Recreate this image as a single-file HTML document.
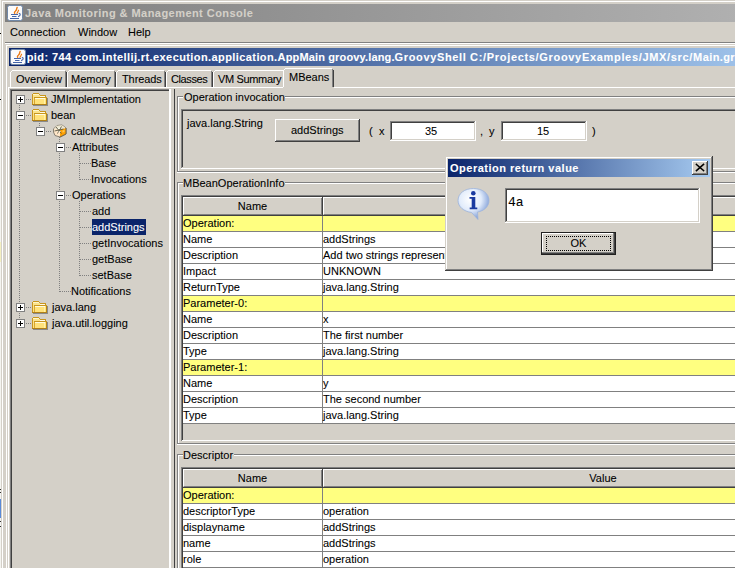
<!DOCTYPE html>
<html><head><meta charset="utf-8">
<style>
html,body{margin:0;padding:0;}
body{width:735px;height:568px;overflow:hidden;position:relative;background:#d4d0c8;font-family:"Liberation Sans",sans-serif;font-size:11px;color:#000;}
.a{position:absolute;}
.t{position:absolute;white-space:pre;line-height:13px;font-size:11px;-webkit-text-stroke:0.08px currentColor;}
.w{background:#fff;}
.g{background:#808080;}
.d{background:#404040;}
.y{background:#ffff80;}
svg{position:absolute;overflow:visible;}
</style></head><body>

<div class="a" style="left:0px;top:0px;width:1px;height:568px;background:#f4f4f0;"></div>
<div class="a" style="left:0px;top:33px;width:1px;height:1px;background:#000;"></div>
<div class="a" style="left:0px;top:99px;width:1px;height:1px;background:#000;"></div>
<div class="a" style="left:0px;top:242px;width:1px;height:20px;background:#f4f0c0;"></div>
<div class="a" style="left:0px;top:499px;width:1px;height:19px;background:#5a8ad8;"></div>
<div class="a" style="left:0px;top:489px;width:1px;height:1px;background:#303030;"></div>
<div class="a" style="left:0px;top:492px;width:1px;height:1px;background:#303030;"></div>
<div class="a" style="left:0px;top:521px;width:1px;height:1px;background:#303030;"></div>
<div class="a" style="left:0px;top:526px;width:1px;height:1px;background:#303030;"></div>
<div class="a w" style="left:2px;top:1px;width:733px;height:1px;"></div>
<div class="a w" style="left:2px;top:1px;width:1px;height:567px;"></div>
<div class="a" style="left:5px;top:4px;width:980px;height:18px;background:linear-gradient(to right,#808080,#c0c0c0);"></div>
<svg style="left:7px;top:5px" width="16" height="16" viewBox="0 0 16 16">
<rect x="0.5" y="0.5" width="15" height="15" rx="2" fill="#fbfbfb" stroke="#7088a8" stroke-width="1"/>
<path d="M10.5 2 C9 3.5 10.5 4.5 8.3 6.3 C7 7.3 7.5 8.2 8 8.8" stroke="#ec7a12" stroke-width="1.4" fill="none"/>
<path d="M11.8 4.8 C10.8 6 11.5 6.8 9.6 8.6" stroke="#ec7a12" stroke-width="1.2" fill="none"/>
<path d="M4 9.5 H11 M5 11.5 H9.5 M3 13.5 H12" stroke="#4466aa" stroke-width="1.1"/>
<path d="M11.8 8.3 C14 8.8 13.6 11.2 11 11.6" stroke="#4466aa" stroke-width="1.1" fill="none"/>
</svg>
<div class="t" style="left:25px;top:7px;font-weight:bold;color:#d4d0c8;letter-spacing:0.45px">Java Monitoring &amp; Management Console</div>
<div class="t" style="left:10px;top:26px;">Connection</div>
<div class="t" style="left:78px;top:26px;">Window</div>
<div class="t" style="left:128px;top:26px;">Help</div>
<div class="a g" style="left:5px;top:42px;width:730px;height:1px;"></div>
<div class="a w" style="left:5px;top:43px;width:730px;height:1px;"></div>
<div class="a w" style="left:6px;top:45px;width:729px;height:1px;"></div>
<div class="a w" style="left:6px;top:45px;width:1px;height:523px;"></div>
<div class="a" style="left:9px;top:48px;width:770px;height:18px;background:linear-gradient(to right,#0a246a,#a6caf0);"></div>
<svg style="left:10px;top:49px" width="16" height="16" viewBox="0 0 16 16">
<rect x="0.5" y="0.5" width="15" height="15" rx="2" fill="#fbfbfb" stroke="#7088a8" stroke-width="1"/>
<path d="M10.5 2 C9 3.5 10.5 4.5 8.3 6.3 C7 7.3 7.5 8.2 8 8.8" stroke="#ec7a12" stroke-width="1.4" fill="none"/>
<path d="M11.8 4.8 C10.8 6 11.5 6.8 9.6 8.6" stroke="#ec7a12" stroke-width="1.2" fill="none"/>
<path d="M4 9.5 H11 M5 11.5 H9.5 M3 13.5 H12" stroke="#4466aa" stroke-width="1.1"/>
<path d="M11.8 8.3 C14 8.8 13.6 11.2 11 11.6" stroke="#4466aa" stroke-width="1.1" fill="none"/>
</svg>
<div class="t" style="left:26.7px;top:51px;font-weight:bold;color:#fff;letter-spacing:0.409px">pid: 744 com.intellij.rt.execution.application.</div>
<div class="t" style="left:277.6px;top:51px;font-weight:bold;color:#fff;letter-spacing:0.146px">AppMain groovy.lang.</div>
<div class="t" style="left:394.6px;top:51px;font-weight:bold;color:#fff;letter-spacing:0.637px">GroovyShell </div>
<div class="t" style="left:470.1px;top:51px;font-weight:bold;color:#fff;letter-spacing:0.677px">C:/Projects/GroovyExamples/JMX/src/</div>
<div class="t" style="left:693.1px;top:51px;font-weight:bold;color:#fff;letter-spacing:0.4px">Main.groovy</div>
<div class="a w" style="left:8px;top:87px;width:275px;height:1px;"></div>
<div class="a w" style="left:334px;top:87px;width:401px;height:1px;"></div>
<div class="a w" style="left:8px;top:87px;width:1px;height:481px;"></div>
<div class="a w" style="left:12px;top:70px;width:53px;height:1px;"></div>
<div class="a w" style="left:11px;top:71px;width:1px;height:1px;"></div>
<div class="a w" style="left:10px;top:72px;width:1px;height:15px;"></div>
<div class="a g" style="left:65px;top:71px;width:1px;height:16px;"></div>
<div class="a d" style="left:66px;top:72px;width:1px;height:15px;"></div>
<div class="t" style="left:16px;top:73px;letter-spacing:0px">Overview</div>
<div class="a w" style="left:69px;top:70px;width:45px;height:1px;"></div>
<div class="a w" style="left:68px;top:71px;width:1px;height:1px;"></div>
<div class="a w" style="left:67px;top:72px;width:1px;height:15px;"></div>
<div class="a g" style="left:114px;top:71px;width:1px;height:16px;"></div>
<div class="a d" style="left:115px;top:72px;width:1px;height:15px;"></div>
<div class="t" style="left:71px;top:73px;letter-spacing:0px">Memory</div>
<div class="a w" style="left:118px;top:70px;width:46px;height:1px;"></div>
<div class="a w" style="left:117px;top:71px;width:1px;height:1px;"></div>
<div class="a w" style="left:116px;top:72px;width:1px;height:15px;"></div>
<div class="a g" style="left:164px;top:71px;width:1px;height:16px;"></div>
<div class="a d" style="left:165px;top:72px;width:1px;height:15px;"></div>
<div class="t" style="left:122px;top:73px;letter-spacing:-0.1px">Threads</div>
<div class="a w" style="left:168px;top:70px;width:43px;height:1px;"></div>
<div class="a w" style="left:167px;top:71px;width:1px;height:1px;"></div>
<div class="a w" style="left:166px;top:72px;width:1px;height:15px;"></div>
<div class="a g" style="left:211px;top:71px;width:1px;height:16px;"></div>
<div class="a d" style="left:212px;top:72px;width:1px;height:15px;"></div>
<div class="t" style="left:171px;top:73px;letter-spacing:-0.4px">Classes</div>
<div class="a w" style="left:215px;top:70px;width:68px;height:1px;"></div>
<div class="a w" style="left:214px;top:71px;width:1px;height:1px;"></div>
<div class="a w" style="left:213px;top:72px;width:1px;height:15px;"></div>
<div class="a g" style="left:283px;top:71px;width:1px;height:16px;"></div>
<div class="a d" style="left:284px;top:72px;width:1px;height:15px;"></div>
<div class="t" style="left:218px;top:73px;letter-spacing:-0.35px">VM Summary</div>
<div class="a" style="left:284px;top:69px;width:49px;height:19px;background:#d4d0c8;"></div>
<div class="a w" style="left:285px;top:68px;width:47px;height:1px;"></div>
<div class="a w" style="left:284px;top:69px;width:1px;height:1px;"></div>
<div class="a w" style="left:283px;top:70px;width:1px;height:17px;"></div>
<div class="a g" style="left:332px;top:69px;width:1px;height:18px;"></div>
<div class="a d" style="left:333px;top:70px;width:1px;height:17px;"></div>
<div class="t" style="left:289px;top:71px;">MBeans</div>
<div class="a g" style="left:10px;top:89px;width:159px;height:1px;"></div>
<div class="a d" style="left:11px;top:90px;width:158px;height:1px;"></div>
<div class="a g" style="left:10px;top:89px;width:1px;height:479px;"></div>
<div class="a d" style="left:11px;top:90px;width:1px;height:478px;"></div>
<div class="a w" style="left:169px;top:89px;width:2px;height:479px;"></div>
<div class="a" style="left:19px;top:105px;width:1px;height:1px;background:#808080;"></div>
<div class="a" style="left:19px;top:107px;width:1px;height:1px;background:#808080;"></div>
<div class="a" style="left:19px;top:109px;width:1px;height:1px;background:#808080;"></div>
<div class="a" style="left:19px;top:111px;width:1px;height:1px;background:#808080;"></div>
<div class="a" style="left:19px;top:113px;width:1px;height:1px;background:#808080;"></div>
<div class="a" style="left:19px;top:115px;width:1px;height:1px;background:#808080;"></div>
<div class="a" style="left:19px;top:117px;width:1px;height:1px;background:#808080;"></div>
<div class="a" style="left:19px;top:119px;width:1px;height:1px;background:#808080;"></div>
<div class="a" style="left:19px;top:121px;width:1px;height:1px;background:#808080;"></div>
<div class="a" style="left:19px;top:123px;width:1px;height:1px;background:#808080;"></div>
<div class="a" style="left:19px;top:125px;width:1px;height:1px;background:#808080;"></div>
<div class="a" style="left:19px;top:127px;width:1px;height:1px;background:#808080;"></div>
<div class="a" style="left:19px;top:129px;width:1px;height:1px;background:#808080;"></div>
<div class="a" style="left:19px;top:131px;width:1px;height:1px;background:#808080;"></div>
<div class="a" style="left:19px;top:133px;width:1px;height:1px;background:#808080;"></div>
<div class="a" style="left:19px;top:135px;width:1px;height:1px;background:#808080;"></div>
<div class="a" style="left:19px;top:137px;width:1px;height:1px;background:#808080;"></div>
<div class="a" style="left:19px;top:139px;width:1px;height:1px;background:#808080;"></div>
<div class="a" style="left:19px;top:141px;width:1px;height:1px;background:#808080;"></div>
<div class="a" style="left:19px;top:143px;width:1px;height:1px;background:#808080;"></div>
<div class="a" style="left:19px;top:145px;width:1px;height:1px;background:#808080;"></div>
<div class="a" style="left:19px;top:147px;width:1px;height:1px;background:#808080;"></div>
<div class="a" style="left:19px;top:149px;width:1px;height:1px;background:#808080;"></div>
<div class="a" style="left:19px;top:151px;width:1px;height:1px;background:#808080;"></div>
<div class="a" style="left:19px;top:153px;width:1px;height:1px;background:#808080;"></div>
<div class="a" style="left:19px;top:155px;width:1px;height:1px;background:#808080;"></div>
<div class="a" style="left:19px;top:157px;width:1px;height:1px;background:#808080;"></div>
<div class="a" style="left:19px;top:159px;width:1px;height:1px;background:#808080;"></div>
<div class="a" style="left:19px;top:161px;width:1px;height:1px;background:#808080;"></div>
<div class="a" style="left:19px;top:163px;width:1px;height:1px;background:#808080;"></div>
<div class="a" style="left:19px;top:165px;width:1px;height:1px;background:#808080;"></div>
<div class="a" style="left:19px;top:167px;width:1px;height:1px;background:#808080;"></div>
<div class="a" style="left:19px;top:169px;width:1px;height:1px;background:#808080;"></div>
<div class="a" style="left:19px;top:171px;width:1px;height:1px;background:#808080;"></div>
<div class="a" style="left:19px;top:173px;width:1px;height:1px;background:#808080;"></div>
<div class="a" style="left:19px;top:175px;width:1px;height:1px;background:#808080;"></div>
<div class="a" style="left:19px;top:177px;width:1px;height:1px;background:#808080;"></div>
<div class="a" style="left:19px;top:179px;width:1px;height:1px;background:#808080;"></div>
<div class="a" style="left:19px;top:181px;width:1px;height:1px;background:#808080;"></div>
<div class="a" style="left:19px;top:183px;width:1px;height:1px;background:#808080;"></div>
<div class="a" style="left:19px;top:185px;width:1px;height:1px;background:#808080;"></div>
<div class="a" style="left:19px;top:187px;width:1px;height:1px;background:#808080;"></div>
<div class="a" style="left:19px;top:189px;width:1px;height:1px;background:#808080;"></div>
<div class="a" style="left:19px;top:191px;width:1px;height:1px;background:#808080;"></div>
<div class="a" style="left:19px;top:193px;width:1px;height:1px;background:#808080;"></div>
<div class="a" style="left:19px;top:195px;width:1px;height:1px;background:#808080;"></div>
<div class="a" style="left:19px;top:197px;width:1px;height:1px;background:#808080;"></div>
<div class="a" style="left:19px;top:199px;width:1px;height:1px;background:#808080;"></div>
<div class="a" style="left:19px;top:201px;width:1px;height:1px;background:#808080;"></div>
<div class="a" style="left:19px;top:203px;width:1px;height:1px;background:#808080;"></div>
<div class="a" style="left:19px;top:205px;width:1px;height:1px;background:#808080;"></div>
<div class="a" style="left:19px;top:207px;width:1px;height:1px;background:#808080;"></div>
<div class="a" style="left:19px;top:209px;width:1px;height:1px;background:#808080;"></div>
<div class="a" style="left:19px;top:211px;width:1px;height:1px;background:#808080;"></div>
<div class="a" style="left:19px;top:213px;width:1px;height:1px;background:#808080;"></div>
<div class="a" style="left:19px;top:215px;width:1px;height:1px;background:#808080;"></div>
<div class="a" style="left:19px;top:217px;width:1px;height:1px;background:#808080;"></div>
<div class="a" style="left:19px;top:219px;width:1px;height:1px;background:#808080;"></div>
<div class="a" style="left:19px;top:221px;width:1px;height:1px;background:#808080;"></div>
<div class="a" style="left:19px;top:223px;width:1px;height:1px;background:#808080;"></div>
<div class="a" style="left:19px;top:225px;width:1px;height:1px;background:#808080;"></div>
<div class="a" style="left:19px;top:227px;width:1px;height:1px;background:#808080;"></div>
<div class="a" style="left:19px;top:229px;width:1px;height:1px;background:#808080;"></div>
<div class="a" style="left:19px;top:231px;width:1px;height:1px;background:#808080;"></div>
<div class="a" style="left:19px;top:233px;width:1px;height:1px;background:#808080;"></div>
<div class="a" style="left:19px;top:235px;width:1px;height:1px;background:#808080;"></div>
<div class="a" style="left:19px;top:237px;width:1px;height:1px;background:#808080;"></div>
<div class="a" style="left:19px;top:239px;width:1px;height:1px;background:#808080;"></div>
<div class="a" style="left:19px;top:241px;width:1px;height:1px;background:#808080;"></div>
<div class="a" style="left:19px;top:243px;width:1px;height:1px;background:#808080;"></div>
<div class="a" style="left:19px;top:245px;width:1px;height:1px;background:#808080;"></div>
<div class="a" style="left:19px;top:247px;width:1px;height:1px;background:#808080;"></div>
<div class="a" style="left:19px;top:249px;width:1px;height:1px;background:#808080;"></div>
<div class="a" style="left:19px;top:251px;width:1px;height:1px;background:#808080;"></div>
<div class="a" style="left:19px;top:253px;width:1px;height:1px;background:#808080;"></div>
<div class="a" style="left:19px;top:255px;width:1px;height:1px;background:#808080;"></div>
<div class="a" style="left:19px;top:257px;width:1px;height:1px;background:#808080;"></div>
<div class="a" style="left:19px;top:259px;width:1px;height:1px;background:#808080;"></div>
<div class="a" style="left:19px;top:261px;width:1px;height:1px;background:#808080;"></div>
<div class="a" style="left:19px;top:263px;width:1px;height:1px;background:#808080;"></div>
<div class="a" style="left:19px;top:265px;width:1px;height:1px;background:#808080;"></div>
<div class="a" style="left:19px;top:267px;width:1px;height:1px;background:#808080;"></div>
<div class="a" style="left:19px;top:269px;width:1px;height:1px;background:#808080;"></div>
<div class="a" style="left:19px;top:271px;width:1px;height:1px;background:#808080;"></div>
<div class="a" style="left:19px;top:273px;width:1px;height:1px;background:#808080;"></div>
<div class="a" style="left:19px;top:275px;width:1px;height:1px;background:#808080;"></div>
<div class="a" style="left:19px;top:277px;width:1px;height:1px;background:#808080;"></div>
<div class="a" style="left:19px;top:279px;width:1px;height:1px;background:#808080;"></div>
<div class="a" style="left:19px;top:281px;width:1px;height:1px;background:#808080;"></div>
<div class="a" style="left:19px;top:283px;width:1px;height:1px;background:#808080;"></div>
<div class="a" style="left:19px;top:285px;width:1px;height:1px;background:#808080;"></div>
<div class="a" style="left:19px;top:287px;width:1px;height:1px;background:#808080;"></div>
<div class="a" style="left:19px;top:289px;width:1px;height:1px;background:#808080;"></div>
<div class="a" style="left:19px;top:291px;width:1px;height:1px;background:#808080;"></div>
<div class="a" style="left:19px;top:293px;width:1px;height:1px;background:#808080;"></div>
<div class="a" style="left:19px;top:295px;width:1px;height:1px;background:#808080;"></div>
<div class="a" style="left:19px;top:297px;width:1px;height:1px;background:#808080;"></div>
<div class="a" style="left:19px;top:299px;width:1px;height:1px;background:#808080;"></div>
<div class="a" style="left:19px;top:301px;width:1px;height:1px;background:#808080;"></div>
<div class="a" style="left:19px;top:303px;width:1px;height:1px;background:#808080;"></div>
<div class="a" style="left:19px;top:305px;width:1px;height:1px;background:#808080;"></div>
<div class="a" style="left:19px;top:307px;width:1px;height:1px;background:#808080;"></div>
<div class="a" style="left:19px;top:309px;width:1px;height:1px;background:#808080;"></div>
<div class="a" style="left:19px;top:311px;width:1px;height:1px;background:#808080;"></div>
<div class="a" style="left:19px;top:313px;width:1px;height:1px;background:#808080;"></div>
<div class="a" style="left:19px;top:315px;width:1px;height:1px;background:#808080;"></div>
<div class="a" style="left:19px;top:317px;width:1px;height:1px;background:#808080;"></div>
<div class="a" style="left:39px;top:119px;width:1px;height:1px;background:#808080;"></div>
<div class="a" style="left:39px;top:121px;width:1px;height:1px;background:#808080;"></div>
<div class="a" style="left:39px;top:123px;width:1px;height:1px;background:#808080;"></div>
<div class="a" style="left:39px;top:125px;width:1px;height:1px;background:#808080;"></div>
<div class="a" style="left:59px;top:137px;width:1px;height:1px;background:#808080;"></div>
<div class="a" style="left:59px;top:139px;width:1px;height:1px;background:#808080;"></div>
<div class="a" style="left:59px;top:141px;width:1px;height:1px;background:#808080;"></div>
<div class="a" style="left:59px;top:143px;width:1px;height:1px;background:#808080;"></div>
<div class="a" style="left:59px;top:145px;width:1px;height:1px;background:#808080;"></div>
<div class="a" style="left:59px;top:147px;width:1px;height:1px;background:#808080;"></div>
<div class="a" style="left:59px;top:149px;width:1px;height:1px;background:#808080;"></div>
<div class="a" style="left:59px;top:151px;width:1px;height:1px;background:#808080;"></div>
<div class="a" style="left:59px;top:153px;width:1px;height:1px;background:#808080;"></div>
<div class="a" style="left:59px;top:155px;width:1px;height:1px;background:#808080;"></div>
<div class="a" style="left:59px;top:157px;width:1px;height:1px;background:#808080;"></div>
<div class="a" style="left:59px;top:159px;width:1px;height:1px;background:#808080;"></div>
<div class="a" style="left:59px;top:161px;width:1px;height:1px;background:#808080;"></div>
<div class="a" style="left:59px;top:163px;width:1px;height:1px;background:#808080;"></div>
<div class="a" style="left:59px;top:165px;width:1px;height:1px;background:#808080;"></div>
<div class="a" style="left:59px;top:167px;width:1px;height:1px;background:#808080;"></div>
<div class="a" style="left:59px;top:169px;width:1px;height:1px;background:#808080;"></div>
<div class="a" style="left:59px;top:171px;width:1px;height:1px;background:#808080;"></div>
<div class="a" style="left:59px;top:173px;width:1px;height:1px;background:#808080;"></div>
<div class="a" style="left:59px;top:175px;width:1px;height:1px;background:#808080;"></div>
<div class="a" style="left:59px;top:177px;width:1px;height:1px;background:#808080;"></div>
<div class="a" style="left:59px;top:179px;width:1px;height:1px;background:#808080;"></div>
<div class="a" style="left:59px;top:181px;width:1px;height:1px;background:#808080;"></div>
<div class="a" style="left:59px;top:183px;width:1px;height:1px;background:#808080;"></div>
<div class="a" style="left:59px;top:185px;width:1px;height:1px;background:#808080;"></div>
<div class="a" style="left:59px;top:187px;width:1px;height:1px;background:#808080;"></div>
<div class="a" style="left:59px;top:189px;width:1px;height:1px;background:#808080;"></div>
<div class="a" style="left:59px;top:191px;width:1px;height:1px;background:#808080;"></div>
<div class="a" style="left:59px;top:193px;width:1px;height:1px;background:#808080;"></div>
<div class="a" style="left:59px;top:195px;width:1px;height:1px;background:#808080;"></div>
<div class="a" style="left:59px;top:197px;width:1px;height:1px;background:#808080;"></div>
<div class="a" style="left:59px;top:199px;width:1px;height:1px;background:#808080;"></div>
<div class="a" style="left:59px;top:201px;width:1px;height:1px;background:#808080;"></div>
<div class="a" style="left:59px;top:203px;width:1px;height:1px;background:#808080;"></div>
<div class="a" style="left:59px;top:205px;width:1px;height:1px;background:#808080;"></div>
<div class="a" style="left:59px;top:207px;width:1px;height:1px;background:#808080;"></div>
<div class="a" style="left:59px;top:209px;width:1px;height:1px;background:#808080;"></div>
<div class="a" style="left:59px;top:211px;width:1px;height:1px;background:#808080;"></div>
<div class="a" style="left:59px;top:213px;width:1px;height:1px;background:#808080;"></div>
<div class="a" style="left:59px;top:215px;width:1px;height:1px;background:#808080;"></div>
<div class="a" style="left:59px;top:217px;width:1px;height:1px;background:#808080;"></div>
<div class="a" style="left:59px;top:219px;width:1px;height:1px;background:#808080;"></div>
<div class="a" style="left:59px;top:221px;width:1px;height:1px;background:#808080;"></div>
<div class="a" style="left:59px;top:223px;width:1px;height:1px;background:#808080;"></div>
<div class="a" style="left:59px;top:225px;width:1px;height:1px;background:#808080;"></div>
<div class="a" style="left:59px;top:227px;width:1px;height:1px;background:#808080;"></div>
<div class="a" style="left:59px;top:229px;width:1px;height:1px;background:#808080;"></div>
<div class="a" style="left:59px;top:231px;width:1px;height:1px;background:#808080;"></div>
<div class="a" style="left:59px;top:233px;width:1px;height:1px;background:#808080;"></div>
<div class="a" style="left:59px;top:235px;width:1px;height:1px;background:#808080;"></div>
<div class="a" style="left:59px;top:237px;width:1px;height:1px;background:#808080;"></div>
<div class="a" style="left:59px;top:239px;width:1px;height:1px;background:#808080;"></div>
<div class="a" style="left:59px;top:241px;width:1px;height:1px;background:#808080;"></div>
<div class="a" style="left:59px;top:243px;width:1px;height:1px;background:#808080;"></div>
<div class="a" style="left:59px;top:245px;width:1px;height:1px;background:#808080;"></div>
<div class="a" style="left:59px;top:247px;width:1px;height:1px;background:#808080;"></div>
<div class="a" style="left:59px;top:249px;width:1px;height:1px;background:#808080;"></div>
<div class="a" style="left:59px;top:251px;width:1px;height:1px;background:#808080;"></div>
<div class="a" style="left:59px;top:253px;width:1px;height:1px;background:#808080;"></div>
<div class="a" style="left:59px;top:255px;width:1px;height:1px;background:#808080;"></div>
<div class="a" style="left:59px;top:257px;width:1px;height:1px;background:#808080;"></div>
<div class="a" style="left:59px;top:259px;width:1px;height:1px;background:#808080;"></div>
<div class="a" style="left:59px;top:261px;width:1px;height:1px;background:#808080;"></div>
<div class="a" style="left:59px;top:263px;width:1px;height:1px;background:#808080;"></div>
<div class="a" style="left:59px;top:265px;width:1px;height:1px;background:#808080;"></div>
<div class="a" style="left:59px;top:267px;width:1px;height:1px;background:#808080;"></div>
<div class="a" style="left:59px;top:269px;width:1px;height:1px;background:#808080;"></div>
<div class="a" style="left:59px;top:271px;width:1px;height:1px;background:#808080;"></div>
<div class="a" style="left:59px;top:273px;width:1px;height:1px;background:#808080;"></div>
<div class="a" style="left:59px;top:275px;width:1px;height:1px;background:#808080;"></div>
<div class="a" style="left:59px;top:277px;width:1px;height:1px;background:#808080;"></div>
<div class="a" style="left:59px;top:279px;width:1px;height:1px;background:#808080;"></div>
<div class="a" style="left:59px;top:281px;width:1px;height:1px;background:#808080;"></div>
<div class="a" style="left:59px;top:283px;width:1px;height:1px;background:#808080;"></div>
<div class="a" style="left:59px;top:285px;width:1px;height:1px;background:#808080;"></div>
<div class="a" style="left:59px;top:287px;width:1px;height:1px;background:#808080;"></div>
<div class="a" style="left:59px;top:289px;width:1px;height:1px;background:#808080;"></div>
<div class="a" style="left:59px;top:291px;width:1px;height:1px;background:#808080;"></div>
<div class="a" style="left:79px;top:153px;width:1px;height:1px;background:#808080;"></div>
<div class="a" style="left:79px;top:155px;width:1px;height:1px;background:#808080;"></div>
<div class="a" style="left:79px;top:157px;width:1px;height:1px;background:#808080;"></div>
<div class="a" style="left:79px;top:159px;width:1px;height:1px;background:#808080;"></div>
<div class="a" style="left:79px;top:161px;width:1px;height:1px;background:#808080;"></div>
<div class="a" style="left:79px;top:163px;width:1px;height:1px;background:#808080;"></div>
<div class="a" style="left:79px;top:165px;width:1px;height:1px;background:#808080;"></div>
<div class="a" style="left:79px;top:167px;width:1px;height:1px;background:#808080;"></div>
<div class="a" style="left:79px;top:169px;width:1px;height:1px;background:#808080;"></div>
<div class="a" style="left:79px;top:171px;width:1px;height:1px;background:#808080;"></div>
<div class="a" style="left:79px;top:173px;width:1px;height:1px;background:#808080;"></div>
<div class="a" style="left:79px;top:175px;width:1px;height:1px;background:#808080;"></div>
<div class="a" style="left:79px;top:177px;width:1px;height:1px;background:#808080;"></div>
<div class="a" style="left:79px;top:179px;width:1px;height:1px;background:#808080;"></div>
<div class="a" style="left:79px;top:201px;width:1px;height:1px;background:#808080;"></div>
<div class="a" style="left:79px;top:203px;width:1px;height:1px;background:#808080;"></div>
<div class="a" style="left:79px;top:205px;width:1px;height:1px;background:#808080;"></div>
<div class="a" style="left:79px;top:207px;width:1px;height:1px;background:#808080;"></div>
<div class="a" style="left:79px;top:209px;width:1px;height:1px;background:#808080;"></div>
<div class="a" style="left:79px;top:211px;width:1px;height:1px;background:#808080;"></div>
<div class="a" style="left:79px;top:213px;width:1px;height:1px;background:#808080;"></div>
<div class="a" style="left:79px;top:215px;width:1px;height:1px;background:#808080;"></div>
<div class="a" style="left:79px;top:217px;width:1px;height:1px;background:#808080;"></div>
<div class="a" style="left:79px;top:219px;width:1px;height:1px;background:#808080;"></div>
<div class="a" style="left:79px;top:221px;width:1px;height:1px;background:#808080;"></div>
<div class="a" style="left:79px;top:223px;width:1px;height:1px;background:#808080;"></div>
<div class="a" style="left:79px;top:225px;width:1px;height:1px;background:#808080;"></div>
<div class="a" style="left:79px;top:227px;width:1px;height:1px;background:#808080;"></div>
<div class="a" style="left:79px;top:229px;width:1px;height:1px;background:#808080;"></div>
<div class="a" style="left:79px;top:231px;width:1px;height:1px;background:#808080;"></div>
<div class="a" style="left:79px;top:233px;width:1px;height:1px;background:#808080;"></div>
<div class="a" style="left:79px;top:235px;width:1px;height:1px;background:#808080;"></div>
<div class="a" style="left:79px;top:237px;width:1px;height:1px;background:#808080;"></div>
<div class="a" style="left:79px;top:239px;width:1px;height:1px;background:#808080;"></div>
<div class="a" style="left:79px;top:241px;width:1px;height:1px;background:#808080;"></div>
<div class="a" style="left:79px;top:243px;width:1px;height:1px;background:#808080;"></div>
<div class="a" style="left:79px;top:245px;width:1px;height:1px;background:#808080;"></div>
<div class="a" style="left:79px;top:247px;width:1px;height:1px;background:#808080;"></div>
<div class="a" style="left:79px;top:249px;width:1px;height:1px;background:#808080;"></div>
<div class="a" style="left:79px;top:251px;width:1px;height:1px;background:#808080;"></div>
<div class="a" style="left:79px;top:253px;width:1px;height:1px;background:#808080;"></div>
<div class="a" style="left:79px;top:255px;width:1px;height:1px;background:#808080;"></div>
<div class="a" style="left:79px;top:257px;width:1px;height:1px;background:#808080;"></div>
<div class="a" style="left:79px;top:259px;width:1px;height:1px;background:#808080;"></div>
<div class="a" style="left:79px;top:261px;width:1px;height:1px;background:#808080;"></div>
<div class="a" style="left:79px;top:263px;width:1px;height:1px;background:#808080;"></div>
<div class="a" style="left:79px;top:265px;width:1px;height:1px;background:#808080;"></div>
<div class="a" style="left:79px;top:267px;width:1px;height:1px;background:#808080;"></div>
<div class="a" style="left:79px;top:269px;width:1px;height:1px;background:#808080;"></div>
<div class="a" style="left:79px;top:271px;width:1px;height:1px;background:#808080;"></div>
<div class="a" style="left:79px;top:273px;width:1px;height:1px;background:#808080;"></div>
<div class="a" style="left:79px;top:275px;width:1px;height:1px;background:#808080;"></div>
<div class="a" style="left:16px;top:95px;width:9px;height:9px;background:#fff;box-shadow:inset 0 0 0 1px #808080"></div>
<div class="a" style="left:18px;top:99px;width:5px;height:1px;background:#000;"></div>
<div class="a" style="left:20px;top:97px;width:1px;height:5px;background:#000;"></div>
<div class="a" style="left:26px;top:99px;width:1px;height:1px;background:#808080;"></div>
<div class="a" style="left:28px;top:99px;width:1px;height:1px;background:#808080;"></div>
<div class="a" style="left:30px;top:99px;width:1px;height:1px;background:#808080;"></div>
<svg style="left:28px;top:90px" width="24" height="18" viewBox="0 0 24 18" shape-rendering="crispEdges">
<rect x="5" y="4" width="7" height="11" fill="#fbe38a"/>
<rect x="12" y="6" width="5" height="2" fill="#fbe38a"/>
<rect x="5" y="4" width="6" height="1" fill="#fff6c8"/>
<rect x="12" y="6" width="5" height="1" fill="#fffbe8"/>
<rect x="5" y="3" width="6" height="1" fill="#c8961e"/>
<rect x="4" y="4" width="1" height="11" fill="#c8961e"/>
<rect x="11" y="4" width="1" height="1" fill="#c8961e"/>
<rect x="12" y="5" width="5" height="1" fill="#c8961e"/>
<rect x="17" y="5" width="1" height="2" fill="#c8961e"/>
<rect x="7" y="8" width="11" height="6" fill="#ffe27a"/>
<rect x="7" y="8" width="10" height="1" fill="#fffbe0"/>
<rect x="16" y="9" width="1" height="5" fill="#fff2a8"/>
<rect x="6" y="7" width="13" height="1" fill="#c8961e"/>
<rect x="6" y="8" width="1" height="6" fill="#d8a630"/>
<rect x="18" y="8" width="1" height="7" fill="#b88616"/>
<rect x="4" y="14" width="15" height="1" fill="#b08018"/>
<rect x="19" y="8" width="1" height="8" fill="#8a8a8a"/>
<rect x="5" y="15" width="15" height="1" fill="#8a8a8a"/>
</svg>
<div class="t" style="left:51px;top:93px;">JMImplementation</div>
<div class="a" style="left:16px;top:111px;width:9px;height:9px;background:#fff;box-shadow:inset 0 0 0 1px #808080"></div>
<div class="a" style="left:18px;top:115px;width:5px;height:1px;background:#000;"></div>
<div class="a" style="left:26px;top:115px;width:1px;height:1px;background:#808080;"></div>
<div class="a" style="left:28px;top:115px;width:1px;height:1px;background:#808080;"></div>
<div class="a" style="left:30px;top:115px;width:1px;height:1px;background:#808080;"></div>
<svg style="left:28px;top:106px" width="24" height="18" viewBox="0 0 24 18" shape-rendering="crispEdges">
<rect x="5" y="4" width="7" height="11" fill="#fbe38a"/>
<rect x="12" y="6" width="5" height="2" fill="#fbe38a"/>
<rect x="5" y="4" width="6" height="1" fill="#fff6c8"/>
<rect x="12" y="6" width="5" height="1" fill="#fffbe8"/>
<rect x="5" y="3" width="6" height="1" fill="#c8961e"/>
<rect x="4" y="4" width="1" height="11" fill="#c8961e"/>
<rect x="11" y="4" width="1" height="1" fill="#c8961e"/>
<rect x="12" y="5" width="5" height="1" fill="#c8961e"/>
<rect x="17" y="5" width="1" height="2" fill="#c8961e"/>
<rect x="7" y="8" width="11" height="6" fill="#ffe27a"/>
<rect x="7" y="8" width="10" height="1" fill="#fffbe0"/>
<rect x="16" y="9" width="1" height="5" fill="#fff2a8"/>
<rect x="6" y="7" width="13" height="1" fill="#c8961e"/>
<rect x="6" y="8" width="1" height="6" fill="#d8a630"/>
<rect x="18" y="8" width="1" height="7" fill="#b88616"/>
<rect x="4" y="14" width="15" height="1" fill="#b08018"/>
<rect x="19" y="8" width="1" height="8" fill="#8a8a8a"/>
<rect x="5" y="15" width="15" height="1" fill="#8a8a8a"/>
</svg>
<div class="t" style="left:51px;top:109px;">bean</div>
<div class="a" style="left:36px;top:127px;width:9px;height:9px;background:#fff;box-shadow:inset 0 0 0 1px #808080"></div>
<div class="a" style="left:38px;top:131px;width:5px;height:1px;background:#000;"></div>
<div class="a" style="left:46px;top:131px;width:1px;height:1px;background:#808080;"></div>
<div class="a" style="left:48px;top:131px;width:1px;height:1px;background:#808080;"></div>
<div class="a" style="left:50px;top:131px;width:1px;height:1px;background:#808080;"></div>
<svg style="left:52px;top:124px" width="16" height="14" viewBox="0 0 16 14">
<path d="M1.5 5 L5 1.5 L10 1 L14 4 V10 L8 13 L3 11.5 L1.5 8 Z" fill="#ffe6c8" stroke="#7a7468" stroke-width="0.9"/>
<path d="M8 5.5 L14 4 V10 L8 13 Z" fill="#ffa000"/>
<path d="M10.5 6.5 L12.5 6 V8 L10.5 8.5 Z" fill="#ffc850"/>
<path d="M2 5 L5 1.8 L10 1.3 L13.6 4 L8 5.5 Z" fill="#ece6d0"/>
<path d="M4 3 L9.5 9.5 M9.5 2.5 L5.5 9.5 M2.5 7 L11.5 5" stroke="#5a5a48" stroke-width="0.9"/>
<path d="M6 4.5 L8 4 M6.5 8 L8.5 7.5" stroke="#fffff0" stroke-width="1"/>
<path d="M14 4 V10 L8 13" stroke="#6a6048" stroke-width="0.9" fill="none"/>
</svg>
<div class="t" style="left:71px;top:125px;">calcMBean</div>
<div class="a" style="left:56px;top:143px;width:9px;height:9px;background:#fff;box-shadow:inset 0 0 0 1px #808080"></div>
<div class="a" style="left:58px;top:147px;width:5px;height:1px;background:#000;"></div>
<div class="a" style="left:66px;top:147px;width:1px;height:1px;background:#808080;"></div>
<div class="a" style="left:68px;top:147px;width:1px;height:1px;background:#808080;"></div>
<div class="a" style="left:70px;top:147px;width:1px;height:1px;background:#808080;"></div>
<div class="t" style="left:72px;top:141px;">Attributes</div>
<div class="a" style="left:80px;top:163px;width:1px;height:1px;background:#808080;"></div>
<div class="a" style="left:82px;top:163px;width:1px;height:1px;background:#808080;"></div>
<div class="a" style="left:84px;top:163px;width:1px;height:1px;background:#808080;"></div>
<div class="a" style="left:86px;top:163px;width:1px;height:1px;background:#808080;"></div>
<div class="a" style="left:88px;top:163px;width:1px;height:1px;background:#808080;"></div>
<div class="a" style="left:90px;top:163px;width:1px;height:1px;background:#808080;"></div>
<div class="t" style="left:91px;top:157px;">Base</div>
<div class="a" style="left:80px;top:179px;width:1px;height:1px;background:#808080;"></div>
<div class="a" style="left:82px;top:179px;width:1px;height:1px;background:#808080;"></div>
<div class="a" style="left:84px;top:179px;width:1px;height:1px;background:#808080;"></div>
<div class="a" style="left:86px;top:179px;width:1px;height:1px;background:#808080;"></div>
<div class="a" style="left:88px;top:179px;width:1px;height:1px;background:#808080;"></div>
<div class="a" style="left:90px;top:179px;width:1px;height:1px;background:#808080;"></div>
<div class="t" style="left:91px;top:173px;">Invocations</div>
<div class="a" style="left:56px;top:191px;width:9px;height:9px;background:#fff;box-shadow:inset 0 0 0 1px #808080"></div>
<div class="a" style="left:58px;top:195px;width:5px;height:1px;background:#000;"></div>
<div class="a" style="left:66px;top:195px;width:1px;height:1px;background:#808080;"></div>
<div class="a" style="left:68px;top:195px;width:1px;height:1px;background:#808080;"></div>
<div class="a" style="left:70px;top:195px;width:1px;height:1px;background:#808080;"></div>
<div class="t" style="left:72px;top:189px;">Operations</div>
<div class="a" style="left:80px;top:211px;width:1px;height:1px;background:#808080;"></div>
<div class="a" style="left:82px;top:211px;width:1px;height:1px;background:#808080;"></div>
<div class="a" style="left:84px;top:211px;width:1px;height:1px;background:#808080;"></div>
<div class="a" style="left:86px;top:211px;width:1px;height:1px;background:#808080;"></div>
<div class="a" style="left:88px;top:211px;width:1px;height:1px;background:#808080;"></div>
<div class="a" style="left:90px;top:211px;width:1px;height:1px;background:#808080;"></div>
<div class="t" style="left:92px;top:205px;">add</div>
<div class="a" style="left:80px;top:227px;width:1px;height:1px;background:#808080;"></div>
<div class="a" style="left:82px;top:227px;width:1px;height:1px;background:#808080;"></div>
<div class="a" style="left:84px;top:227px;width:1px;height:1px;background:#808080;"></div>
<div class="a" style="left:86px;top:227px;width:1px;height:1px;background:#808080;"></div>
<div class="a" style="left:88px;top:227px;width:1px;height:1px;background:#808080;"></div>
<div class="a" style="left:90px;top:227px;width:1px;height:1px;background:#808080;"></div>
<div class="a" style="left:92px;top:219px;width:54px;height:16px;background:#0a246a;"></div>
<div class="t" style="left:92px;top:221px;color:#fff">addStrings</div>
<div class="a" style="left:80px;top:243px;width:1px;height:1px;background:#808080;"></div>
<div class="a" style="left:82px;top:243px;width:1px;height:1px;background:#808080;"></div>
<div class="a" style="left:84px;top:243px;width:1px;height:1px;background:#808080;"></div>
<div class="a" style="left:86px;top:243px;width:1px;height:1px;background:#808080;"></div>
<div class="a" style="left:88px;top:243px;width:1px;height:1px;background:#808080;"></div>
<div class="a" style="left:90px;top:243px;width:1px;height:1px;background:#808080;"></div>
<div class="t" style="left:92px;top:237px;">getInvocations</div>
<div class="a" style="left:80px;top:259px;width:1px;height:1px;background:#808080;"></div>
<div class="a" style="left:82px;top:259px;width:1px;height:1px;background:#808080;"></div>
<div class="a" style="left:84px;top:259px;width:1px;height:1px;background:#808080;"></div>
<div class="a" style="left:86px;top:259px;width:1px;height:1px;background:#808080;"></div>
<div class="a" style="left:88px;top:259px;width:1px;height:1px;background:#808080;"></div>
<div class="a" style="left:90px;top:259px;width:1px;height:1px;background:#808080;"></div>
<div class="t" style="left:92px;top:253px;">getBase</div>
<div class="a" style="left:80px;top:275px;width:1px;height:1px;background:#808080;"></div>
<div class="a" style="left:82px;top:275px;width:1px;height:1px;background:#808080;"></div>
<div class="a" style="left:84px;top:275px;width:1px;height:1px;background:#808080;"></div>
<div class="a" style="left:86px;top:275px;width:1px;height:1px;background:#808080;"></div>
<div class="a" style="left:88px;top:275px;width:1px;height:1px;background:#808080;"></div>
<div class="a" style="left:90px;top:275px;width:1px;height:1px;background:#808080;"></div>
<div class="t" style="left:92px;top:269px;">setBase</div>
<div class="a" style="left:60px;top:291px;width:1px;height:1px;background:#808080;"></div>
<div class="a" style="left:62px;top:291px;width:1px;height:1px;background:#808080;"></div>
<div class="a" style="left:64px;top:291px;width:1px;height:1px;background:#808080;"></div>
<div class="a" style="left:66px;top:291px;width:1px;height:1px;background:#808080;"></div>
<div class="a" style="left:68px;top:291px;width:1px;height:1px;background:#808080;"></div>
<div class="a" style="left:70px;top:291px;width:1px;height:1px;background:#808080;"></div>
<div class="t" style="left:71px;top:285px;">Notifications</div>
<div class="a" style="left:16px;top:303px;width:9px;height:9px;background:#fff;box-shadow:inset 0 0 0 1px #808080"></div>
<div class="a" style="left:18px;top:307px;width:5px;height:1px;background:#000;"></div>
<div class="a" style="left:20px;top:305px;width:1px;height:5px;background:#000;"></div>
<div class="a" style="left:26px;top:307px;width:1px;height:1px;background:#808080;"></div>
<div class="a" style="left:28px;top:307px;width:1px;height:1px;background:#808080;"></div>
<div class="a" style="left:30px;top:307px;width:1px;height:1px;background:#808080;"></div>
<svg style="left:28px;top:298px" width="24" height="18" viewBox="0 0 24 18" shape-rendering="crispEdges">
<rect x="5" y="4" width="7" height="11" fill="#fbe38a"/>
<rect x="12" y="6" width="5" height="2" fill="#fbe38a"/>
<rect x="5" y="4" width="6" height="1" fill="#fff6c8"/>
<rect x="12" y="6" width="5" height="1" fill="#fffbe8"/>
<rect x="5" y="3" width="6" height="1" fill="#c8961e"/>
<rect x="4" y="4" width="1" height="11" fill="#c8961e"/>
<rect x="11" y="4" width="1" height="1" fill="#c8961e"/>
<rect x="12" y="5" width="5" height="1" fill="#c8961e"/>
<rect x="17" y="5" width="1" height="2" fill="#c8961e"/>
<rect x="7" y="8" width="11" height="6" fill="#ffe27a"/>
<rect x="7" y="8" width="10" height="1" fill="#fffbe0"/>
<rect x="16" y="9" width="1" height="5" fill="#fff2a8"/>
<rect x="6" y="7" width="13" height="1" fill="#c8961e"/>
<rect x="6" y="8" width="1" height="6" fill="#d8a630"/>
<rect x="18" y="8" width="1" height="7" fill="#b88616"/>
<rect x="4" y="14" width="15" height="1" fill="#b08018"/>
<rect x="19" y="8" width="1" height="8" fill="#8a8a8a"/>
<rect x="5" y="15" width="15" height="1" fill="#8a8a8a"/>
</svg>
<div class="t" style="left:52px;top:301px;">java.lang</div>
<div class="a" style="left:16px;top:319px;width:9px;height:9px;background:#fff;box-shadow:inset 0 0 0 1px #808080"></div>
<div class="a" style="left:18px;top:323px;width:5px;height:1px;background:#000;"></div>
<div class="a" style="left:20px;top:321px;width:1px;height:5px;background:#000;"></div>
<div class="a" style="left:26px;top:323px;width:1px;height:1px;background:#808080;"></div>
<div class="a" style="left:28px;top:323px;width:1px;height:1px;background:#808080;"></div>
<div class="a" style="left:30px;top:323px;width:1px;height:1px;background:#808080;"></div>
<svg style="left:28px;top:314px" width="24" height="18" viewBox="0 0 24 18" shape-rendering="crispEdges">
<rect x="5" y="4" width="7" height="11" fill="#fbe38a"/>
<rect x="12" y="6" width="5" height="2" fill="#fbe38a"/>
<rect x="5" y="4" width="6" height="1" fill="#fff6c8"/>
<rect x="12" y="6" width="5" height="1" fill="#fffbe8"/>
<rect x="5" y="3" width="6" height="1" fill="#c8961e"/>
<rect x="4" y="4" width="1" height="11" fill="#c8961e"/>
<rect x="11" y="4" width="1" height="1" fill="#c8961e"/>
<rect x="12" y="5" width="5" height="1" fill="#c8961e"/>
<rect x="17" y="5" width="1" height="2" fill="#c8961e"/>
<rect x="7" y="8" width="11" height="6" fill="#ffe27a"/>
<rect x="7" y="8" width="10" height="1" fill="#fffbe0"/>
<rect x="16" y="9" width="1" height="5" fill="#fff2a8"/>
<rect x="6" y="7" width="13" height="1" fill="#c8961e"/>
<rect x="6" y="8" width="1" height="6" fill="#d8a630"/>
<rect x="18" y="8" width="1" height="7" fill="#b88616"/>
<rect x="4" y="14" width="15" height="1" fill="#b08018"/>
<rect x="19" y="8" width="1" height="8" fill="#8a8a8a"/>
<rect x="5" y="15" width="15" height="1" fill="#8a8a8a"/>
</svg>
<div class="t" style="left:52px;top:317px;">java.util.logging</div>
<div class="a g" style="left:177px;top:96px;width:1px;height:76px;"></div>
<div class="a w" style="left:178px;top:97px;width:1px;height:76px;"></div>
<div class="a g" style="left:177px;top:171px;width:563px;height:1px;"></div>
<div class="a w" style="left:177px;top:172px;width:564px;height:1px;"></div>
<div class="a g" style="left:177px;top:96px;width:6px;height:1px;"></div>
<div class="a w" style="left:178px;top:97px;width:5px;height:1px;"></div>
<div class="a g" style="left:285px;top:96px;width:455px;height:1px;"></div>
<div class="a w" style="left:285px;top:97px;width:455px;height:1px;"></div>
<div class="t" style="left:184px;top:91px;">Operation invocation</div>
<div class="a g" style="left:181px;top:109px;width:560px;height:1px;"></div>
<div class="a d" style="left:182px;top:110px;width:560px;height:1px;"></div>
<div class="a g" style="left:181px;top:109px;width:1px;height:59px;"></div>
<div class="a d" style="left:182px;top:110px;width:1px;height:57px;"></div>
<div class="a w" style="left:181px;top:168px;width:560px;height:1px;"></div>
<div class="a" style="left:182px;top:167px;width:560px;height:1px;background:#d4d0c8;"></div>
<div class="t" style="left:187px;top:117px;">java.lang.String</div>
<div class="a w" style="left:275px;top:119px;width:84px;height:1px;"></div>
<div class="a w" style="left:275px;top:119px;width:1px;height:22px;"></div>
<div class="a g" style="left:276px;top:140px;width:83px;height:1px;"></div>
<div class="a d" style="left:275px;top:141px;width:85px;height:1px;"></div>
<div class="a g" style="left:358px;top:120px;width:1px;height:21px;"></div>
<div class="a d" style="left:359px;top:119px;width:1px;height:23px;"></div>
<div class="t" style="left:291px;top:124px;">addStrings</div>
<div class="t" style="left:369px;top:125px;">(</div>
<div class="t" style="left:379px;top:125px;">x</div>
<div class="a w" style="left:390px;top:121px;width:86px;height:20px;"></div>
<div class="a g" style="left:390px;top:121px;width:85px;height:1px;"></div>
<div class="a g" style="left:390px;top:121px;width:1px;height:19px;"></div>
<div class="a d" style="left:391px;top:122px;width:83px;height:1px;"></div>
<div class="a d" style="left:391px;top:122px;width:1px;height:17px;"></div>
<div class="a" style="left:391px;top:139px;width:84px;height:1px;background:#d4d0c8;"></div>
<div class="a" style="left:474px;top:122px;width:1px;height:18px;background:#d4d0c8;"></div>
<div class="t" style="left:425px;top:125px;">35</div>
<div class="t" style="left:480px;top:125px;">,</div>
<div class="t" style="left:489px;top:125px;">y</div>
<div class="a w" style="left:501px;top:121px;width:86px;height:20px;"></div>
<div class="a g" style="left:501px;top:121px;width:85px;height:1px;"></div>
<div class="a g" style="left:501px;top:121px;width:1px;height:19px;"></div>
<div class="a d" style="left:502px;top:122px;width:83px;height:1px;"></div>
<div class="a d" style="left:502px;top:122px;width:1px;height:17px;"></div>
<div class="a" style="left:502px;top:139px;width:84px;height:1px;background:#d4d0c8;"></div>
<div class="a" style="left:585px;top:122px;width:1px;height:18px;background:#d4d0c8;"></div>
<div class="t" style="left:537px;top:125px;">15</div>
<div class="t" style="left:592px;top:125px;">)</div>
<div class="a g" style="left:177px;top:182px;width:1px;height:262px;"></div>
<div class="a w" style="left:178px;top:183px;width:1px;height:262px;"></div>
<div class="a g" style="left:177px;top:443px;width:563px;height:1px;"></div>
<div class="a w" style="left:177px;top:444px;width:564px;height:1px;"></div>
<div class="a g" style="left:177px;top:182px;width:6px;height:1px;"></div>
<div class="a w" style="left:178px;top:183px;width:5px;height:1px;"></div>
<div class="a g" style="left:285px;top:182px;width:455px;height:1px;"></div>
<div class="a w" style="left:285px;top:183px;width:455px;height:1px;"></div>
<div class="t" style="left:183px;top:177px;">MBeanOperationInfo</div>
<div class="a g" style="left:181px;top:195px;width:560px;height:1px;"></div>
<div class="a d" style="left:182px;top:196px;width:560px;height:1px;"></div>
<div class="a g" style="left:181px;top:195px;width:1px;height:246px;"></div>
<div class="a d" style="left:182px;top:196px;width:1px;height:245px;"></div>
<div class="a" style="left:183px;top:197px;width:700px;height:19px;background:#d4d0c8;"></div>
<div class="a w" style="left:183px;top:197px;width:139px;height:1px;"></div>
<div class="a w" style="left:183px;top:197px;width:1px;height:17px;"></div>
<div class="a g" style="left:184px;top:214px;width:138px;height:1px;"></div>
<div class="a d" style="left:183px;top:215px;width:140px;height:1px;"></div>
<div class="a g" style="left:321px;top:198px;width:1px;height:17px;"></div>
<div class="a d" style="left:322px;top:197px;width:1px;height:19px;"></div>
<div class="a w" style="left:323px;top:197px;width:560px;height:1px;"></div>
<div class="a w" style="left:323px;top:197px;width:1px;height:17px;"></div>
<div class="a g" style="left:324px;top:214px;width:560px;height:1px;"></div>
<div class="a d" style="left:323px;top:215px;width:560px;height:1px;"></div>
<div class="t" style="left:183px;top:200px;width:139px;text-align:center">Name</div>
<div class="t" style="left:323px;top:200px;width:560px;text-align:center">Value</div>
<div class="a" style="left:183px;top:216px;width:560px;height:15px;background:#ffff80;"></div>
<div class="a g" style="left:183px;top:231px;width:560px;height:1px;"></div>
<div class="a g" style="left:322px;top:216px;width:1px;height:16px;"></div>
<div class="t" style="left:183px;top:217px;">Operation:</div>
<div class="a" style="left:183px;top:232px;width:560px;height:15px;background:#fff;"></div>
<div class="a g" style="left:183px;top:247px;width:560px;height:1px;"></div>
<div class="a g" style="left:322px;top:232px;width:1px;height:16px;"></div>
<div class="t" style="left:183px;top:233px;">Name</div>
<div class="t" style="left:323px;top:233px;">addStrings</div>
<div class="a" style="left:183px;top:248px;width:560px;height:15px;background:#fff;"></div>
<div class="a g" style="left:183px;top:263px;width:560px;height:1px;"></div>
<div class="a g" style="left:322px;top:248px;width:1px;height:16px;"></div>
<div class="t" style="left:183px;top:249px;">Description</div>
<div class="t" style="left:323px;top:249px;">Add two strings represented as numbers</div>
<div class="a" style="left:183px;top:264px;width:560px;height:15px;background:#fff;"></div>
<div class="a g" style="left:183px;top:279px;width:560px;height:1px;"></div>
<div class="a g" style="left:322px;top:264px;width:1px;height:16px;"></div>
<div class="t" style="left:183px;top:265px;">Impact</div>
<div class="t" style="left:323px;top:265px;">UNKNOWN</div>
<div class="a" style="left:183px;top:280px;width:560px;height:15px;background:#fff;"></div>
<div class="a g" style="left:183px;top:295px;width:560px;height:1px;"></div>
<div class="a g" style="left:322px;top:280px;width:1px;height:16px;"></div>
<div class="t" style="left:183px;top:281px;">ReturnType</div>
<div class="t" style="left:323px;top:281px;">java.lang.String</div>
<div class="a" style="left:183px;top:296px;width:560px;height:15px;background:#ffff80;"></div>
<div class="a g" style="left:183px;top:311px;width:560px;height:1px;"></div>
<div class="a g" style="left:322px;top:296px;width:1px;height:16px;"></div>
<div class="t" style="left:183px;top:297px;">Parameter-0:</div>
<div class="a" style="left:183px;top:312px;width:560px;height:15px;background:#fff;"></div>
<div class="a g" style="left:183px;top:327px;width:560px;height:1px;"></div>
<div class="a g" style="left:322px;top:312px;width:1px;height:16px;"></div>
<div class="t" style="left:183px;top:313px;">Name</div>
<div class="t" style="left:323px;top:313px;">x</div>
<div class="a" style="left:183px;top:328px;width:560px;height:15px;background:#fff;"></div>
<div class="a g" style="left:183px;top:343px;width:560px;height:1px;"></div>
<div class="a g" style="left:322px;top:328px;width:1px;height:16px;"></div>
<div class="t" style="left:183px;top:329px;">Description</div>
<div class="t" style="left:323px;top:329px;">The first number</div>
<div class="a" style="left:183px;top:344px;width:560px;height:15px;background:#fff;"></div>
<div class="a g" style="left:183px;top:359px;width:560px;height:1px;"></div>
<div class="a g" style="left:322px;top:344px;width:1px;height:16px;"></div>
<div class="t" style="left:183px;top:345px;">Type</div>
<div class="t" style="left:323px;top:345px;">java.lang.String</div>
<div class="a" style="left:183px;top:360px;width:560px;height:15px;background:#ffff80;"></div>
<div class="a g" style="left:183px;top:375px;width:560px;height:1px;"></div>
<div class="a g" style="left:322px;top:360px;width:1px;height:16px;"></div>
<div class="t" style="left:183px;top:361px;">Parameter-1:</div>
<div class="a" style="left:183px;top:376px;width:560px;height:15px;background:#fff;"></div>
<div class="a g" style="left:183px;top:391px;width:560px;height:1px;"></div>
<div class="a g" style="left:322px;top:376px;width:1px;height:16px;"></div>
<div class="t" style="left:183px;top:377px;">Name</div>
<div class="t" style="left:323px;top:377px;">y</div>
<div class="a" style="left:183px;top:392px;width:560px;height:15px;background:#fff;"></div>
<div class="a g" style="left:183px;top:407px;width:560px;height:1px;"></div>
<div class="a g" style="left:322px;top:392px;width:1px;height:16px;"></div>
<div class="t" style="left:183px;top:393px;">Description</div>
<div class="t" style="left:323px;top:393px;">The second number</div>
<div class="a" style="left:183px;top:408px;width:560px;height:15px;background:#fff;"></div>
<div class="a g" style="left:183px;top:423px;width:560px;height:1px;"></div>
<div class="a g" style="left:322px;top:408px;width:1px;height:16px;"></div>
<div class="t" style="left:183px;top:409px;">Type</div>
<div class="t" style="left:323px;top:409px;">java.lang.String</div>
<div class="a" style="left:183px;top:439px;width:560px;height:1px;background:#d4d0c8;"></div>
<div class="a w" style="left:182px;top:440px;width:560px;height:1px;"></div>
<div class="a g" style="left:177px;top:454px;width:1px;height:146px;"></div>
<div class="a w" style="left:178px;top:455px;width:1px;height:146px;"></div>
<div class="a g" style="left:177px;top:599px;width:563px;height:1px;"></div>
<div class="a w" style="left:177px;top:600px;width:564px;height:1px;"></div>
<div class="a g" style="left:177px;top:454px;width:6px;height:1px;"></div>
<div class="a w" style="left:178px;top:455px;width:5px;height:1px;"></div>
<div class="a g" style="left:234px;top:454px;width:506px;height:1px;"></div>
<div class="a w" style="left:234px;top:455px;width:506px;height:1px;"></div>
<div class="t" style="left:183px;top:449px;">Descriptor</div>
<div class="a g" style="left:181px;top:467px;width:560px;height:1px;"></div>
<div class="a d" style="left:182px;top:468px;width:560px;height:1px;"></div>
<div class="a g" style="left:181px;top:467px;width:1px;height:133px;"></div>
<div class="a d" style="left:182px;top:468px;width:1px;height:132px;"></div>
<div class="a" style="left:183px;top:469px;width:700px;height:19px;background:#d4d0c8;"></div>
<div class="a w" style="left:183px;top:469px;width:139px;height:1px;"></div>
<div class="a w" style="left:183px;top:469px;width:1px;height:17px;"></div>
<div class="a g" style="left:184px;top:486px;width:138px;height:1px;"></div>
<div class="a d" style="left:183px;top:487px;width:140px;height:1px;"></div>
<div class="a g" style="left:321px;top:470px;width:1px;height:17px;"></div>
<div class="a d" style="left:322px;top:469px;width:1px;height:19px;"></div>
<div class="a w" style="left:323px;top:469px;width:560px;height:1px;"></div>
<div class="a w" style="left:323px;top:469px;width:1px;height:17px;"></div>
<div class="a g" style="left:324px;top:486px;width:560px;height:1px;"></div>
<div class="a d" style="left:323px;top:487px;width:560px;height:1px;"></div>
<div class="t" style="left:183px;top:472px;width:139px;text-align:center">Name</div>
<div class="t" style="left:323px;top:472px;width:560px;text-align:center">Value</div>
<div class="a" style="left:183px;top:488px;width:560px;height:15px;background:#ffff80;"></div>
<div class="a g" style="left:183px;top:503px;width:560px;height:1px;"></div>
<div class="a g" style="left:322px;top:488px;width:1px;height:16px;"></div>
<div class="t" style="left:183px;top:489px;">Operation:</div>
<div class="a" style="left:183px;top:504px;width:560px;height:15px;background:#fff;"></div>
<div class="a g" style="left:183px;top:519px;width:560px;height:1px;"></div>
<div class="a g" style="left:322px;top:504px;width:1px;height:16px;"></div>
<div class="t" style="left:183px;top:505px;">descriptorType</div>
<div class="t" style="left:323px;top:505px;">operation</div>
<div class="a" style="left:183px;top:520px;width:560px;height:15px;background:#fff;"></div>
<div class="a g" style="left:183px;top:535px;width:560px;height:1px;"></div>
<div class="a g" style="left:322px;top:520px;width:1px;height:16px;"></div>
<div class="t" style="left:183px;top:521px;">displayname</div>
<div class="t" style="left:323px;top:521px;">addStrings</div>
<div class="a" style="left:183px;top:536px;width:560px;height:15px;background:#fff;"></div>
<div class="a g" style="left:183px;top:551px;width:560px;height:1px;"></div>
<div class="a g" style="left:322px;top:536px;width:1px;height:16px;"></div>
<div class="t" style="left:183px;top:537px;">name</div>
<div class="t" style="left:323px;top:537px;">addStrings</div>
<div class="a" style="left:183px;top:552px;width:560px;height:15px;background:#fff;"></div>
<div class="a g" style="left:183px;top:567px;width:560px;height:1px;"></div>
<div class="a g" style="left:322px;top:552px;width:1px;height:16px;"></div>
<div class="t" style="left:183px;top:553px;">role</div>
<div class="t" style="left:323px;top:553px;">operation</div>
<div class="a d" style="left:174px;top:89px;width:1px;height:479px;"></div>
<div class="a" style="left:445px;top:156px;width:268px;height:115px;background:#d4d0c8;"></div>
<div class="a w" style="left:446px;top:157px;width:265px;height:1px;"></div>
<div class="a w" style="left:446px;top:157px;width:1px;height:112px;"></div>
<div class="a g" style="left:446px;top:269px;width:266px;height:1px;"></div>
<div class="a g" style="left:711px;top:157px;width:1px;height:113px;"></div>
<div class="a d" style="left:445px;top:270px;width:268px;height:1px;"></div>
<div class="a d" style="left:712px;top:156px;width:1px;height:115px;"></div>
<div class="a" style="left:448px;top:159px;width:262px;height:18px;background:linear-gradient(to right,#0a246a,#a6caf0);"></div>
<div class="t" style="left:450px;top:162px;font-weight:bold;color:#fff;letter-spacing:0.5px">Operation return value</div>
<div class="a" style="left:692px;top:161px;width:16px;height:14px;background:#d4d0c8;"></div>
<div class="a w" style="left:692px;top:161px;width:15px;height:1px;"></div>
<div class="a w" style="left:692px;top:161px;width:1px;height:13px;"></div>
<div class="a g" style="left:693px;top:173px;width:14px;height:1px;"></div>
<div class="a g" style="left:706px;top:162px;width:1px;height:12px;"></div>
<div class="a d" style="left:692px;top:174px;width:16px;height:1px;"></div>
<div class="a d" style="left:707px;top:161px;width:1px;height:14px;"></div>
<svg style="left:692px;top:161px" width="16" height="14" viewBox="0 0 16 14"><path d="M4.5 3.5 L11.5 9.5 M11.5 3.5 L4.5 9.5" stroke="#000" stroke-width="1.6" stroke-linecap="square"/></svg>
<svg style="left:456px;top:186px" width="36" height="36" viewBox="0 0 36 36">
<defs><radialGradient id="ig" cx="0.4" cy="0.35" r="0.7">
<stop offset="0" stop-color="#ffffff"/><stop offset="0.5" stop-color="#e2ecfb"/><stop offset="1" stop-color="#6f90d0"/></radialGradient></defs>
<path d="M17.5 2.5 C26.5 2.5 33 7.5 33 14.5 C33 20.5 28 25 21.5 26 L22 33.5 L15.5 26.5 C8 25.5 2 21 2 14.5 C2 7.5 8.5 2.5 17.5 2.5 Z" fill="url(#ig)" stroke="#9db4dc" stroke-width="0.8"/>
<circle cx="17.3" cy="7.3" r="2.3" fill="#1a3aa0"/>
<path d="M13.5 11 H19.3 V21.5 H21.3 V23.3 H13.7 V21.5 H15.7 V12.8 H13.5 Z" fill="#1a3aa0"/>
</svg>
<div class="a w" style="left:505px;top:188px;width:195px;height:35px;"></div>
<div class="a g" style="left:505px;top:188px;width:194px;height:1px;"></div>
<div class="a g" style="left:505px;top:188px;width:1px;height:34px;"></div>
<div class="a d" style="left:506px;top:189px;width:192px;height:1px;"></div>
<div class="a d" style="left:506px;top:189px;width:1px;height:32px;"></div>
<div class="a" style="left:506px;top:221px;width:193px;height:1px;background:#d4d0c8;"></div>
<div class="a" style="left:698px;top:189px;width:1px;height:33px;background:#d4d0c8;"></div>
<div class="t" style="left:508px;top:196px;font-family:'Liberation Mono',monospace;font-size:13px;line-height:14px">4a</div>
<div class="a" style="left:541px;top:232px;width:75px;height:23px;background:#202020;"></div>
<div class="a" style="left:542px;top:233px;width:73px;height:21px;background:#404040;"></div>
<div class="a" style="left:542px;top:233px;width:72px;height:20px;background:#808080;"></div>
<div class="a" style="left:542px;top:233px;width:71px;height:19px;background:#fff;"></div>
<div class="a" style="left:543px;top:234px;width:70px;height:18px;background:#d4d0c8;"></div>
<div class="a" style="left:546px;top:236px;width:65px;height:15px;background:transparent;box-sizing:border-box;border:1px dotted #000"></div>
<div class="t" style="left:541px;top:237px;width:75px;text-align:center">OK</div>
</body></html>
